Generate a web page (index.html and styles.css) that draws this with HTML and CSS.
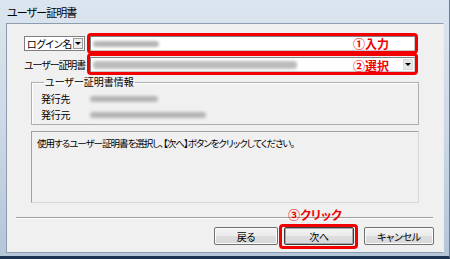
FILE: index.html
```html
<!DOCTYPE html>
<html lang="ja">
<head>
  <meta charset="UTF-8" />
  <title>ユーザー証明書</title>
  <link rel="stylesheet" href="styles.css">
</head>
<body>
  <div class="window">
    <div class="titlebar">ユーザー証明書</div>

    <div class="client">
      <div class="row row-login">
        <div class="combo combo-small">
          <span class="combo-text">ログイン名</span>
          <span class="arrow"></span>
        </div>
        <div class="field">
          <span class="blur blur-login"></span>
        </div>
      </div>

      <div class="row row-cert">
        <span class="label">ユーザー証明書</span>
        <div class="field combo-wide">
          <span class="blur blur-cert"></span>
          <span class="arrow arrow-flat"></span>
        </div>
      </div>

      <fieldset class="group">
        <legend>ユーザー証明書情報</legend>
        <div class="info-row">
          <span class="info-label">発行先</span>
          <span class="blur blur-to"></span>
        </div>
        <div class="info-row">
          <span class="info-label">発行元</span>
          <span class="blur blur-from"></span>
        </div>
      </fieldset>

      <div class="message">使用するユーザー証明書を選択し、【次へ】ボタンをクリックしてください。</div>

      <div class="separator"></div>

      <div class="buttons">
        <button class="btn btn-back">戻る</button>
        <button class="btn btn-next">次へ</button>
        <button class="btn btn-cancel">キャンセル</button>
      </div>
    </div>

    <!-- red annotations on top of the dialog -->
    <div class="mark mark-input"></div>
    <div class="mark mark-select"></div>
    <div class="mark mark-next"></div>
    <span class="note note-input">①入力</span>
    <span class="note note-select">②選択</span>
    <span class="note note-next">③クリック</span>
  </div>
</body>
</html>
```

FILE: styles.css
```css
body {
  margin: 0;
  padding: 0;
  width: 450px;
  height: 259px;
  overflow: hidden;
  font-family: "Noto Sans CJK JP", "Noto Sans", sans-serif;
  font-feature-settings: "palt";
  font-size: 10px;
  color: #000;
  white-space: nowrap;
}

.window {
  position: relative;
  width: 449px;
  height: 256px;
  background: linear-gradient(180deg, #dbe5ef 0%, #cfdae6 45%, #b4c5d8 100%);
  border-right: 1px solid #6d7f94;
  border-bottom: 3px solid #1d3352;
}

.titlebar {
  height: 23px;
  padding-left: 7px;
  line-height: 25px;
  font-size: 11px;
  letter-spacing: -0.9px;
}

.client {
  box-sizing: border-box;
  width: 438px;
  height: 230px;
  margin-left: 6px;
  border: 1px solid #8c9db2;
  border-right-color: #e8eef5;
  background: #f0f0f0;
  padding-top: 12px;
}

.row {
  display: flex;
  align-items: center;
  height: 15px;
}

.row-login {
  padding-left: 17px;
}

.row-cert {
  margin-top: 6px;
  padding-left: 17px;
}

.combo {
  box-sizing: border-box;
  display: flex;
  align-items: center;
  height: 15px;
  background: #fff;
  border: 1px solid #7f7f7f;
}

.combo-small {
  flex-shrink: 0;
  width: 61px;
  padding-left: 2px;
}

.combo-text {
  flex: 1;
  line-height: 13px;
  letter-spacing: -0.3px;
}

.arrow {
  box-sizing: border-box;
  position: relative;
  flex-shrink: 0;
  width: 10px;
  height: 11px;
  margin-right: 1px;
  background: #ececec;
  border: 1px solid #9a9a9a;
}

.arrow::after {
  content: "";
  position: absolute;
  left: 1px;
  top: 3px;
  border-left: 3px solid transparent;
  border-right: 3px solid transparent;
  border-top: 3px solid #000;
}

.arrow-flat {
  margin-left: auto;
  border-color: #dcdcdc;
  background: #e6e6e6;
}

.field {
  box-sizing: border-box;
  flex-shrink: 0;
  display: flex;
  align-items: center;
  width: 325px;
  height: 15px;
  margin-left: 5px;
  background: #fff;
  border: 1px solid #7f7f7f;
  border-right-color: #c8c8c8;
  border-bottom-color: #c8c8c8;
}

.label {
  flex-shrink: 0;
  width: 66px;
  letter-spacing: -1.1px;
}

.combo-wide {
  margin-left: 0;
}

.blur {
  display: inline-block;
  height: 6px;
  margin-left: 2px;
  background: #b4b4b4;
  border-radius: 3px;
  filter: blur(1.5px);
}

.blur-login {
  width: 66px;
}

.blur-cert {
  width: 204px;
  height: 8px;
  background: #bcbcbc;
}

.group {
  box-sizing: border-box;
  width: 388px;
  height: 49px;
  margin: 4px 0 0 24px;
  padding: 2px 0 0 9px;
  border: 1px solid #aeaeae;
  box-shadow: inset 1px 1px 0 #fff;
}

.group legend {
  padding: 0 1px;
  margin-left: 3px;
  letter-spacing: 0;
  line-height: 12px;
}

.info-row {
  display: flex;
  align-items: center;
  height: 15px;
  margin-top: 1px;
}

.info-label {
  width: 47px;
  letter-spacing: -0.3px;
}

.blur-to {
  width: 68px;
}

.blur-from {
  width: 116px;
}

.message {
  box-sizing: border-box;
  width: 388px;
  height: 72px;
  margin: 6px 0 0 24px;
  padding: 4px 0 0 5px;
  border: 1px solid #a0a0a0;
  border-right-color: #d8d8d8;
  border-bottom-color: #d8d8d8;
  font-size: 9.5px;
  letter-spacing: -1px;
}

.separator {
  width: 417px;
  height: 1px;
  margin: 14px 0 0 9px;
  background: #a0a0a0;
  border-bottom: 1px solid #fff;
}

.buttons {
  display: flex;
  margin: 8px 0 0 207px;
}

.btn {
  box-sizing: border-box;
  height: 18px;
  padding: 0;
  font-family: inherit;
  font-size: 10px;
  font-feature-settings: "palt";
  letter-spacing: -0.3px;
  color: #000;
  background: linear-gradient(180deg, #f4f4f4 0%, #ebebeb 50%, #dddddd 51%, #d8d8d8 100%);
  border: 1px solid #707070;
  border-radius: 2px;
  box-shadow: inset 0 0 0 1px #fbfbfb;
}

.btn-back {
  width: 64px;
}

.btn-next {
  width: 70px;
  margin-left: 6px;
  border-color: #3c3c3c;
  box-shadow: inset 0 0 0 1px #a8a8a8;
}

.btn-cancel {
  width: 70px;
  margin-left: 10px;
}

.mark {
  position: absolute;
  box-sizing: border-box;
  border: 3px solid #f20000;
  border-radius: 4px;
}

.mark-input {
  left: 87px;
  top: 33px;
  width: 331px;
  height: 21px;
}

.mark-select {
  left: 87px;
  top: 53px;
  width: 331px;
  height: 22px;
}

.mark-next {
  left: 279px;
  top: 224px;
  width: 79px;
  height: 25px;
}

.note {
  position: absolute;
  color: #f20000;
  font-weight: bold;
  font-size: 12px;
  line-height: 14px;
}

.note-input {
  left: 353px;
  top: 37px;
}

.note-select {
  left: 353px;
  top: 59px;
}

.note-next {
  left: 288px;
  top: 208px;
}
```
